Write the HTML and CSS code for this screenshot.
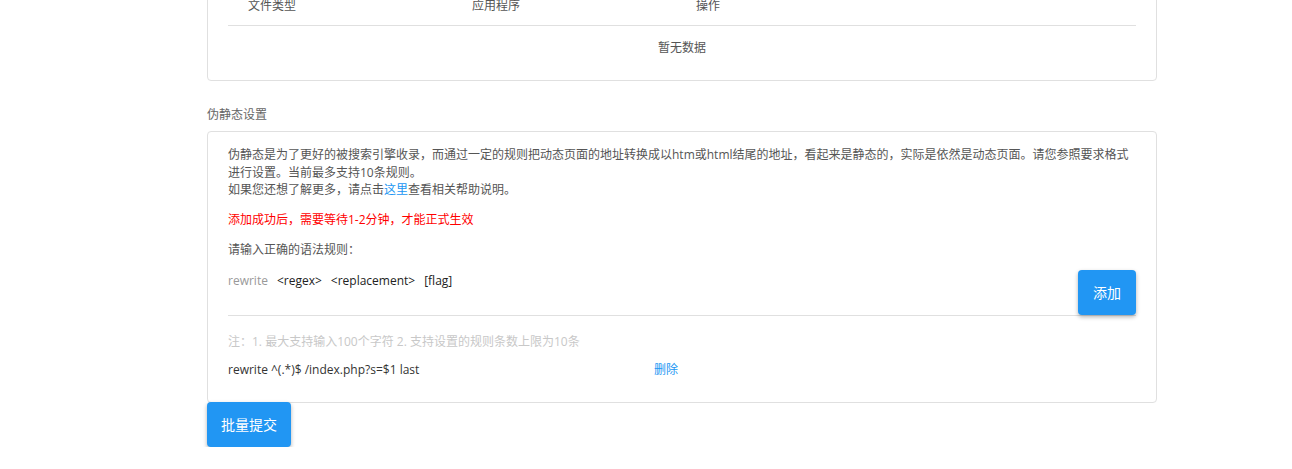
FILE: index.html
```html
<!DOCTYPE html>
<html lang="zh-CN">
<head>
    <meta charset="UTF-8">
    <meta name="viewport" content="width=device-width, initial-scale=1.0">
    <title>伪静态设置</title>
    <link rel="stylesheet" href="styles.css">
</head>
<body>
    <div class="page">
        <div class="card card-table">
            <table class="data-table">
                <thead>
                    <tr>
                        <th class="col">文件类型</th>
                        <th class="col">应用程序</th>
                        <th class="col">操作</th>
                        <th></th>
                    </tr>
                </thead>
                <tbody>
                    <tr>
                        <td colspan="4" class="empty">暂无数据</td>
                    </tr>
                </tbody>
            </table>
        </div>

        <div class="section-title">伪静态设置</div>

        <div class="card card-rewrite">
            <p class="desc">
                伪静态是为了更好的被搜索引擎收录，而通过一定的规则把动态页面的地址转换成以htm或html结尾的地址，看起来是静态的，实际是依然是动态页面。请您参照要求格式进行设置。当前最多支持10条规则。<br>
                如果您还想了解更多，请点击<a href="#">这里</a>查看相关帮助说明。
            </p>
            <p class="warn">添加成功后，需要等待1-2分钟，才能正式生效</p>
            <p class="hint">请输入正确的语法规则：</p>

            <div class="input-row">
                <div class="syntax">
                    <span class="kw">rewrite</span>
                    <span>&lt;regex&gt;</span>
                    <span>&lt;replacement&gt;</span>
                    <span>[flag]</span>
                </div>
                <button class="btn">添加</button>
            </div>

            <p class="note">注：1. 最大支持输入100个字符 2. 支持设置的规则条数上限为10条</p>

            <div class="rule">
                <span class="rule-text">rewrite ^(.*)$ /index.php?s=$1 last</span>
                <a href="#" class="rule-del">删除</a>
            </div>
        </div>

        <button class="btn btn-submit">批量提交</button>
    </div>
</body>
</html>
```

FILE: styles.css
```css
* {
    margin: 0;
    padding: 0;
    box-sizing: border-box;
}

body {
    font-family: "Segoe UI", "Open Sans", "Noto Sans CJK SC", sans-serif;
    font-size: 12px;
    color: #555;
    background-color: #fff;
}

a {
    color: #2196f3;
    text-decoration: none;
}

.page {
    width: 950px;
    margin: -36px 0 0 207px;
}

.card {
    border: 1px solid #e0e0e0;
    border-radius: 4px;
    background-color: #fff;
}

.card-table {
    padding: 20px 20px 11px;
}

.data-table {
    width: 100%;
    border-collapse: collapse;
    table-layout: fixed;
}

.data-table th {
    height: 40px;
    padding-left: 20px;
    text-align: left;
    font-weight: normal;
    color: #555;
    border-bottom: 1px solid #e0e0e0;
}

.data-table th.col {
    width: 224px;
}

.data-table td.empty {
    height: 44px;
    text-align: center;
    color: #555;
}

.section-title {
    margin: 25px 0 8px;
    line-height: 17px;
    color: #666;
}

.card-rewrite {
    padding: 14px 20px 23px;
}

.desc {
    line-height: 17.5px;
}

.warn {
    margin-top: 12px;
    line-height: 18px;
    color: #f00;
}

.hint {
    margin-top: 12px;
    line-height: 18px;
}

.input-row {
    display: flex;
    justify-content: space-between;
    align-items: flex-end;
    margin-top: 11px;
    border-bottom: 1px solid #e0e0e0;
}

.syntax {
    display: flex;
    gap: 9px;
    align-self: flex-start;
    padding-top: 2px;
    line-height: 18px;
    color: #222;
}

.syntax .kw {
    color: #999;
}

.btn {
    height: 45px;
    padding: 0 15px;
    border: none;
    border-radius: 4px;
    background-color: #2196f3;
    color: #fff;
    font-family: inherit;
    font-size: 14px;
    box-shadow: 0 2px 4px rgba(0, 0, 0, 0.3);
    cursor: pointer;
}

.note {
    margin-top: 17px;
    line-height: 18px;
    color: #c8c8c8;
}

.rule {
    display: flex;
    margin-top: 10px;
    line-height: 18px;
    color: #333;
}

.rule-text {
    width: 426px;
}

.btn-submit {
    margin-top: -1px;
    padding: 0 14px;
}
```
